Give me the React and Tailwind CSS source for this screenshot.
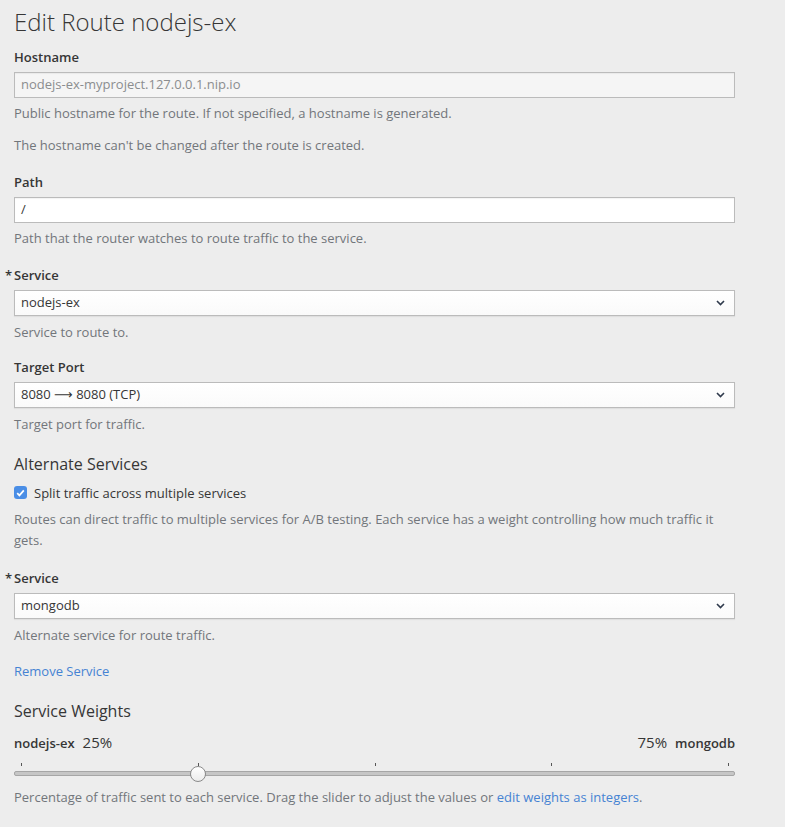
import React from 'react';

const font = { fontFamily: '"Open Sans", "Liberation Sans", sans-serif' };

function Chevron() {
  return (
    <svg width="9" height="6" viewBox="0 0 9 6" className="shrink-0">
      <path d="M1 1l3.5 3.5L8 1" fill="none" stroke="#2f3a4c" strokeWidth="1.6" />
    </svg>
  );
}

function Label({ children, required }) {
  return (
    <div className="flex text-[13px] leading-[22px] font-semibold text-[#363636] mb-[4px]">
      {required && <span className="-ml-[9px] w-[9px]">*</span>}
      {children}
    </div>
  );
}

function Help({ children, className = '' }) {
  return <div className={`text-[13px] leading-[21.5px] text-[#72767b] ${className}`}>{children}</div>;
}

function TextInput({ value, disabled }) {
  return (
    <div
      className={`h-[26px] border border-[#bbbbbb] px-[6px] flex items-center text-[13px] shadow-[inset_0_1px_1px_rgba(0,0,0,0.05)] ${
        disabled ? 'bg-[#f5f5f5] text-[#8b8d8f]' : 'bg-white text-[#363636]'
      }`}
    >
      {value}
    </div>
  );
}

function Select({ children }) {
  return (
    <div className="mt-[2px] h-[26px] border border-[#bbbbbb] bg-gradient-to-b from-white to-[#fafafa] pl-[6px] pr-[9px] flex items-center justify-between text-[13px] text-[#363636] shadow-[0_1px_1px_rgba(0,0,0,0.06)]">
      <span>{children}</span>
      <Chevron />
    </div>
  );
}

function WeightSlider({ value }) {
  const ticks = [0, 25, 50, 75, 100];
  return (
    <div className="relative h-[24px] mt-[7px]">
      {ticks.map((t) => (
        <div
          key={t}
          className="absolute top-[2px] w-px h-[3px] bg-[#555]"
          style={{ left: `calc(7px + (100% - 14px) * ${t / 100})` }}
        />
      ))}
      <div className="absolute left-0 right-0 top-[10px] h-[5px] rounded-[2px] bg-[#c6c6c6] border border-[#a6a6a6]" />
      <div
        className="absolute top-[5px] w-[16px] h-[16px] -ml-[8px] rounded-full border border-[#8a8a8a] bg-gradient-to-b from-white to-[#ececec]"
        style={{ left: `calc(7px + (100% - 14px) * ${value / 100})` }}
      />
    </div>
  );
}

export default function App() {
  return (
    <div className="min-h-screen bg-[#ededed] text-[#363636]" style={font}>
      <div className="ml-[14px] w-[721px] pt-[7px] pb-[20px]">
        <h1 className="text-[24px] leading-[29px] font-light text-[#363636] mb-[10px]">Edit Route nodejs-ex</h1>

        <div className="mb-[15px]">
          <Label>Hostname</Label>
          <TextInput value="nodejs-ex-myproject.127.0.0.1.nip.io" disabled />
          <Help className="mt-[5px] mb-[10px]">Public hostname for the route. If not specified, a hostname is generated.</Help>
          <Help>The hostname can't be changed after the route is created.</Help>
        </div>

        <div className="mb-[14px]">
          <Label>Path</Label>
          <TextInput value="/" />
          <Help className="mt-[5px]">Path that the router watches to route traffic to the service.</Help>
        </div>

        <div className="mb-[13px]">
          <Label required>Service</Label>
          <Select>nodejs-ex</Select>
          <Help className="mt-[6px]">Service to route to.</Help>
        </div>

        <div className="mb-[19px]">
          <Label>Target Port</Label>
          <Select>
            8080 <span style={{ fontFamily: '"DejaVu Sans", sans-serif' }}>⟶</span> 8080 (TCP)
          </Select>
          <Help className="mt-[6px]">Target port for traffic.</Help>
        </div>

        <h3 className="text-[16px] leading-[18px] text-[#363636] mb-[9px]">Alternate Services</h3>
        <label className="flex items-center gap-[7px] text-[13px] leading-[22px]">
          <span className="w-[13px] h-[13px] rounded-[3px] bg-[#4a8ee6] flex items-center justify-center">
            <svg width="9" height="8" viewBox="0 0 9 8">
              <path d="M1.2 4.2l2.2 2.2L7.8 1.4" fill="none" stroke="white" strokeWidth="1.7" />
            </svg>
          </span>
          Split traffic across multiple services
        </label>
        <Help className="mt-[5px] mb-[15px]">
          Routes can direct traffic to multiple services for A/B testing. Each service has a weight controlling how much traffic it gets.
        </Help>

        <div className="mb-[14px]">
          <Label required>Service</Label>
          <Select>mongodb</Select>
          <Help className="mt-[6px]">Alternate service for route traffic.</Help>
        </div>

        <a href="#" className="block text-[13px] leading-[22px] text-[#4683d3] mb-[20px]">Remove Service</a>

        <h3 className="text-[16px] leading-[18px] text-[#363636] mb-[11px]">Service Weights</h3>
        <div className="flex items-center justify-between leading-[22px]">
          <div className="flex items-baseline gap-[8px]">
            <span className="text-[13px] font-semibold">nodejs-ex</span>
            <span className="text-[15px]">25%</span>
          </div>
          <div className="flex items-baseline gap-[8px]">
            <span className="text-[15px]">75%</span>
            <span className="text-[13px] font-semibold">mongodb</span>
          </div>
        </div>
        <WeightSlider value={25} />
        <Help className="mt-[2px]">
          Percentage of traffic sent to each service. Drag the slider to adjust the values or{' '}
          <a href="#" className="text-[#4683d3]">edit weights as integers</a>.
        </Help>
      </div>
    </div>
  );
}
